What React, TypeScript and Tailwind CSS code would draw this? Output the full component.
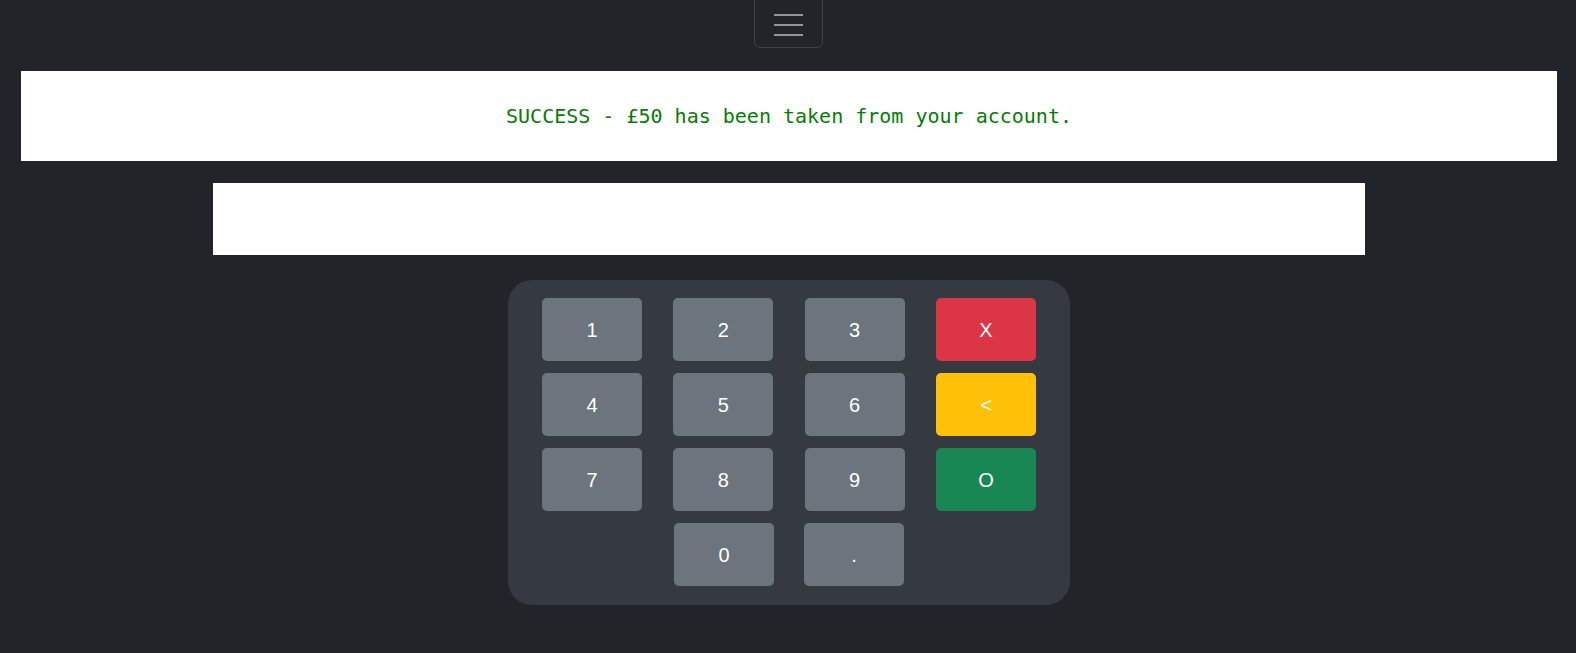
import React from "react";

const Key = ({ label, color = "bg-[#6c757d]" }: { label: string; color?: string }) => (
  <button
    className={`${color} w-[100px] h-[63px] rounded-[5px] text-white text-[20px] flex items-center justify-center`}
    style={{ fontFamily: '"Liberation Sans", Arial, sans-serif' }}
  >
    {label}
  </button>
);

export default function App() {
  return (
    <div className="min-h-[653px] w-full bg-[#212529] overflow-hidden">
      <div className="flex justify-center">
        <button className="mt-[-10px] w-[69px] h-[58px] border border-[#3c4147] rounded-[6px] flex flex-col items-center justify-end pb-[11px] gap-[8px]">
          <span className="block w-[29px] h-[2px] bg-[#939598]" />
          <span className="block w-[29px] h-[2px] bg-[#939598]" />
          <span className="block w-[29px] h-[2px] bg-[#939598]" />
        </button>
      </div>
      <div className="ml-[21px] mt-[23px] w-[1536px] h-[90px] bg-white flex items-center justify-center">
        <span
          className="text-[20px] text-[#008000]"
          style={{ fontFamily: '"DejaVu Sans Mono", "Liberation Mono", monospace' }}
        >
          SUCCESS - £50 has been taken from your account.
        </span>
      </div>
      <div className="ml-[213px] mt-[22px] w-[1152px] h-[72px] bg-white" />
      <div className="ml-[508px] mt-[25px] w-[562px] h-[325px] bg-[#343a40] rounded-[24px] pt-[18px] px-[34px] flex flex-col gap-[12px]">
        <div className="flex justify-between w-[494px]">
          <Key label="1" />
          <Key label="2" />
          <Key label="3" />
          <Key label="X" color="bg-[#dc3545]" />
        </div>
        <div className="flex justify-between w-[494px]">
          <Key label="4" />
          <Key label="5" />
          <Key label="6" />
          <Key label="<" color="bg-[#ffc107]" />
        </div>
        <div className="flex justify-between w-[494px]">
          <Key label="7" />
          <Key label="8" />
          <Key label="9" />
          <Key label="O" color="bg-[#198754]" />
        </div>
        <div className="flex justify-center gap-[30px] w-[494px]">
          <Key label="0" />
          <Key label="." />
        </div>
      </div>
    </div>
  );
}
